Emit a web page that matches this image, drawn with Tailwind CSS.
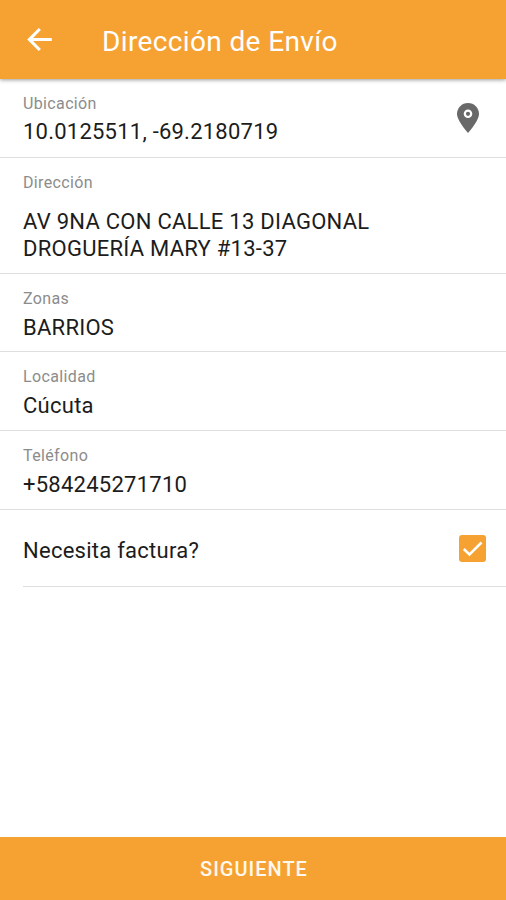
<!DOCTYPE html>
<html lang="es">
<head>
<meta charset="utf-8">
<title>Dirección de Envío</title>
<script src="https://cdn.jsdelivr.net/npm/@tailwindcss/browser@4"></script>
</head>
<body class="bg-white text-[#1c1c1c] font-[Roboto,sans-serif]">
<div class="flex h-[900px] w-[506px] flex-col overflow-hidden">
  <header class="z-10 flex h-[79px] shrink-0 items-center bg-[#f6a233] pt-[3px] text-white shadow-[0_1px_4px_rgba(0,0,0,0.4)]">
    <svg class="mb-[3px] ml-[21px] size-[37px]" viewBox="0 0 24 24" fill="currentColor"><path d="M20 11H7.830l5.090-5.090L11.500 4.500 4 12l7.500 7.500 1.420-1.410L7.830 13H20z"/></svg>
    <h1 class="ml-[44px] pt-px text-[28px] leading-8 tracking-[0.37px] whitespace-nowrap">Dirección de Envío</h1>
  </header>
  <main class="flex flex-1 flex-col text-[22px] leading-[27px] tracking-[0.26px]">
    <section class="flex h-[79px] items-center justify-between border-b border-[#dedede] pl-[23px] pr-[20px]">
      <div class="pt-[3px]"><p class="text-[16px] leading-5 tracking-[0.36px] text-[#8c8c8c]">Ubicación</p><p class="mt-1 tracking-[0.23px]">10.0125511, -69.2180719</p></div>
      <svg class="size-[36px]" viewBox="0 0 36 36"><path fill="#696969" d="M18 3C11.900 3 7 7.900 7 14c0 6.800 11 19 11 19s11-12.200 11-19C29 7.900 24.100 3 18 3z"/><circle cx="18" cy="13.800" r="3.200" fill="none" stroke="white" stroke-width="2.200"/></svg>
    </section>
    <section class="h-[116px] border-b border-[#dedede] pl-[23px] pt-[15px]"><p class="text-[16px] leading-5 tracking-[0.36px] text-[#8c8c8c]">Dirección</p><p class="mt-[15px]">AV 9NA CON CALLE 13 DIAGONAL<br>DROGUERÍA MARY #13-37</p></section>
    <section class="h-[78px] border-b border-[#dedede] pl-[23px] pt-[15px]"><p class="text-[16px] leading-5 tracking-[0.36px] text-[#8c8c8c]">Zonas</p><p class="mt-[5px]">BARRIOS</p></section>
    <section class="h-[79px] border-b border-[#dedede] pl-[23px] pt-[15px]"><p class="text-[16px] leading-5 tracking-[0.36px] text-[#8c8c8c]">Localidad</p><p class="mt-[5px]">Cúcuta</p></section>
    <section class="h-[79px] border-b border-[#dedede] pl-[23px] pt-[15px]"><p class="text-[16px] leading-5 tracking-[0.36px] text-[#8c8c8c]">Teléfono</p><p class="mt-[5px]">+584245271710</p></section>
    <section class="ml-[23px] flex h-[77px] items-center justify-between border-b border-[#dedede] pr-[20px]"><p class="pt-[4px]">Necesita factura?</p>
      <div class="flex size-[27px] items-center justify-center rounded-[3px] bg-[#f6a233]"><svg class="size-[27px]" viewBox="0 0 27 27" fill="none" stroke="white" stroke-width="2.500"><path d="M4.800 14l5.700 5.500L22.500 7.500"/></svg></div>
    </section>
  </main>
  <button class="h-[63px] shrink-0 bg-[#f6a233] pl-[2px] text-[20px] font-medium tracking-[1px] text-[#fff8ec]">SIGUIENTE</button>
</div>
</body>
</html>
